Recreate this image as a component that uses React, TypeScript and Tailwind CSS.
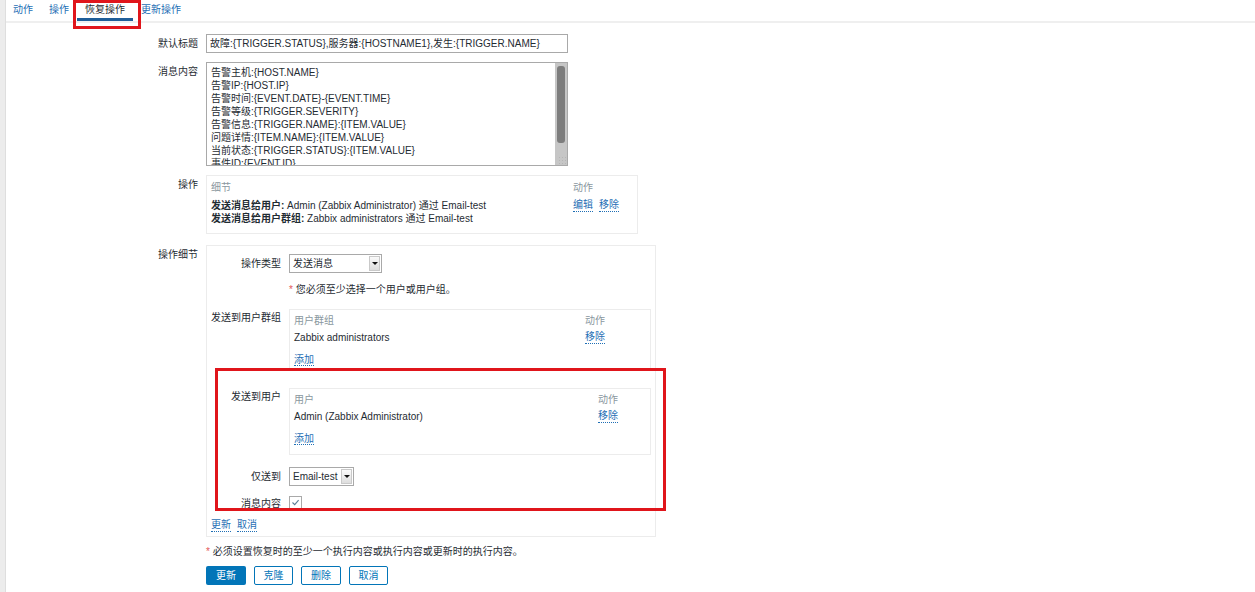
import React from "react";

const font = "font-['Liberation_Sans','Noto_Sans_CJK_SC',sans-serif]";

type RowProps = {
  label: string;
  className?: string;
  children: React.ReactNode;
};

const FormRow = ({ label, className = "", children }: RowProps) => (
  <div className={`flex gap-[8px] ${className}`}>
    <div className="w-[192px] shrink-0 pt-[3px] text-right leading-[13px]">{label}</div>
    <div>{children}</div>
  </div>
);

const SubRow = ({ label, className = "", labelClass = "", children }: RowProps & { labelClass?: string }) => (
  <div className={`flex gap-[8px] ${className}`}>
    <div className={`w-[71px] shrink-0 text-right leading-[13px] ${labelClass}`}>{label}</div>
    <div>{children}</div>
  </div>
);

const DotLink = ({ children }: { children: React.ReactNode }) => (
  <span className="cursor-pointer border-b border-dotted border-[#1f6fb5] leading-[12px] text-[#1f6fb5]">
    {children}
  </span>
);

const Select = ({ value, width }: { value: string; width: string }) => (
  <div className={`flex h-[19px] ${width} items-stretch border border-[#a9a9a9] bg-white`}>
    <div className="flex flex-1 items-center pl-[3px] leading-[13px]">{value}</div>
    <div className="m-[1px] flex w-[11px] items-center justify-center border border-[#c9c9c9] bg-gradient-to-b from-[#fafafa] to-[#dedede]">
      <div className="h-0 w-0 border-x-[3px] border-t-[3px] border-x-transparent border-t-[#111]" />
    </div>
  </div>
);

const messageLines = [
  "告警主机:{HOST.NAME}",
  "告警IP:{HOST.IP}",
  "告警时间:{EVENT.DATE}-{EVENT.TIME}",
  "告警等级:{TRIGGER.SEVERITY}",
  "告警信息:{TRIGGER.NAME}:{ITEM.VALUE}",
  "问题详情:{ITEM.NAME}:{ITEM.VALUE}",
  "当前状态:{TRIGGER.STATUS}:{ITEM.VALUE}",
  "事件ID:{EVENT.ID}",
];

const tabs = ["动作", "操作", "恢复操作", "更新操作"];

export default function App() {
  return (
    <div className={`relative flex h-[592px] w-full overflow-hidden bg-white text-[10px] text-[#1f2c33] ${font}`}>
      <div className="w-[6px] shrink-0 border-r border-[#dedede] bg-[#ececec]" />

      <div className="flex-1">
        {/* tabs */}
        <div className="flex h-[23px] items-start border-b-2 border-[#efefef]">
          {tabs.map((t) => (
            <div
              key={t}
              className={
                t === "恢复操作"
                  ? "flex h-[21px] items-start border-b-[3px] border-[#1f5e99] px-[8px] pt-[3px] leading-[13px] text-[#1f2c33]"
                  : "flex h-[21px] items-start px-[8px] pt-[3px] leading-[13px] text-[#1f6fb5] first:pl-[7px]"
              }
            >
              {t}
            </div>
          ))}
        </div>

        <FormRow label="默认标题" className="mt-[11px]">
          <div className="flex h-[19px] w-[362px] items-center border border-[#a9a9a9] pl-[3px] leading-[13px]">
            故障:{"{TRIGGER.STATUS}"},服务器:{"{HOSTNAME1}"},发生:{"{TRIGGER.NAME}"}
          </div>
        </FormRow>

        <FormRow label="消息内容" className="mt-[9px]">
          <div className="relative flex h-[104px] w-[362px] border border-[#a9a9a9]">
            <div className="flex-1 overflow-hidden pl-[4px] pt-[3px] leading-[13px]">
              {messageLines.map((l) => (
                <div key={l}>{l}</div>
              ))}
            </div>
            <div className="w-[12px] bg-[#c6c6c6] px-[2px] pt-[3px]">
              <div className="h-[77px] rounded-[3px] bg-[#7d7d7d]" />
            </div>
            <div className="absolute bottom-[1px] right-[1px] h-[8px] w-[8px] bg-[radial-gradient(#b5b5b5_1px,transparent_1px)] bg-[length:3px_3px]" />
          </div>
        </FormRow>

        <FormRow label="操作" className="mt-[9px]">
          <div className="h-[59px] w-[432px] border border-[#ececec] pl-[4px] pt-[5px] leading-[13px]">
            <div className="flex text-[#8a979e]">
              <div className="w-[362px]">细节</div>
              <div>动作</div>
            </div>
            <div className="mt-[5px] flex">
              <div className="w-[362px]">
                <div>
                  <span className="font-bold">发送消息给用户: </span>Admin (Zabbix Administrator) 通过 Email-test
                </div>
                <div>
                  <span className="font-bold">发送消息给用户群组: </span>Zabbix administrators 通过 Email-test
                </div>
              </div>
              <div className="flex items-start gap-[6px]">
                <DotLink>编辑</DotLink>
                <DotLink>移除</DotLink>
              </div>
            </div>
          </div>
        </FormRow>

        <FormRow label="操作细节" className="mt-[11px]">
          <div className="h-[292px] w-[450px] border border-[#ececec] px-[3px] pt-[8px]">
            <SubRow label="操作类型" labelClass="pt-[3px]">
              <Select value="发送消息" width="w-[93px]" />
            </SubRow>

            <SubRow label="" className="mt-[10px]">
              <div className="leading-[13px]">
                <span className="text-[#e45959]">*</span> 您必须至少选择一个用户或用户组。
              </div>
            </SubRow>

            <SubRow label="发送到用户群组" className="mt-[13px]" labelClass="pt-[2px]">
              <div className="h-[61px] w-[362px] border border-[#ececec] pl-[4px] pt-[4px] leading-[13px]">
                <div className="flex text-[#8a979e]">
                  <div className="w-[291px]">用户群组</div>
                  <div>动作</div>
                </div>
                <div className="mt-[4px] flex">
                  <div className="w-[291px]">Zabbix administrators</div>
                  <DotLink>移除</DotLink>
                </div>
                <div className="mt-[9px]">
                  <DotLink>添加</DotLink>
                </div>
              </div>
            </SubRow>

            <SubRow label="发送到用户" className="mt-[18px]" labelClass="pt-[2px]">
              <div className="h-[67px] w-[362px] border border-[#ececec] pl-[4px] pt-[4px] leading-[13px]">
                <div className="flex text-[#8a979e]">
                  <div className="w-[304px]">用户</div>
                  <div>动作</div>
                </div>
                <div className="mt-[4px] flex">
                  <div className="w-[304px]">Admin (Zabbix Administrator)</div>
                  <DotLink>移除</DotLink>
                </div>
                <div className="mt-[9px]">
                  <DotLink>添加</DotLink>
                </div>
              </div>
            </SubRow>

            <SubRow label="仅送到" className="mt-[12px]" labelClass="pt-[3px]">
              <Select value="Email-test" width="w-[65px]" />
            </SubRow>

            <SubRow label="消息内容" className="mt-[10px]" labelClass="pt-[1px]">
              <div className="flex h-[13px] w-[13px] items-center justify-center border border-[#a9a9a9] bg-white">
                <svg width="9" height="9" viewBox="0 0 9 9" fill="none">
                  <path d="M1.5 4.5 L3.7 6.6 L7.6 2.2" stroke="#5a7d95" strokeWidth="1.1" />
                </svg>
              </div>
            </SubRow>

            <div className="mt-[9px] flex gap-[6px] pl-[1px] leading-[13px]">
              <DotLink>更新</DotLink>
              <DotLink>取消</DotLink>
            </div>
          </div>
        </FormRow>

        <FormRow label="" className="mt-[8px]">
          <div className="leading-[13px]">
            <span className="text-[#e45959]">*</span> 必须设置恢复时的至少一个执行内容或执行内容或更新时的执行内容。
          </div>
          <div className="mt-[8px] flex gap-[8px]">
            <button className="h-[19px] w-[40px] rounded-[2px] bg-[#0275b8] leading-[13px] text-white">更新</button>
            <button className="h-[19px] w-[39px] rounded-[2px] border border-[#0275b8] bg-white leading-[13px] text-[#0275b8]">克隆</button>
            <button className="h-[19px] w-[40px] rounded-[2px] border border-[#0275b8] bg-white leading-[13px] text-[#0275b8]">删除</button>
            <button className="h-[19px] w-[39px] rounded-[2px] border border-[#0275b8] bg-white leading-[13px] text-[#0275b8]">取消</button>
          </div>
        </FormRow>
      </div>

      {/* red annotation boxes */}
      <div className="pointer-events-none absolute left-[73px] top-0 h-[29px] w-[68px] border-[3px] border-[#e0151b]" />
      <div className="pointer-events-none absolute left-[215px] top-[368px] h-[143px] w-[451px] border-[3px] border-[#e0151b]" />
    </div>
  );
}
